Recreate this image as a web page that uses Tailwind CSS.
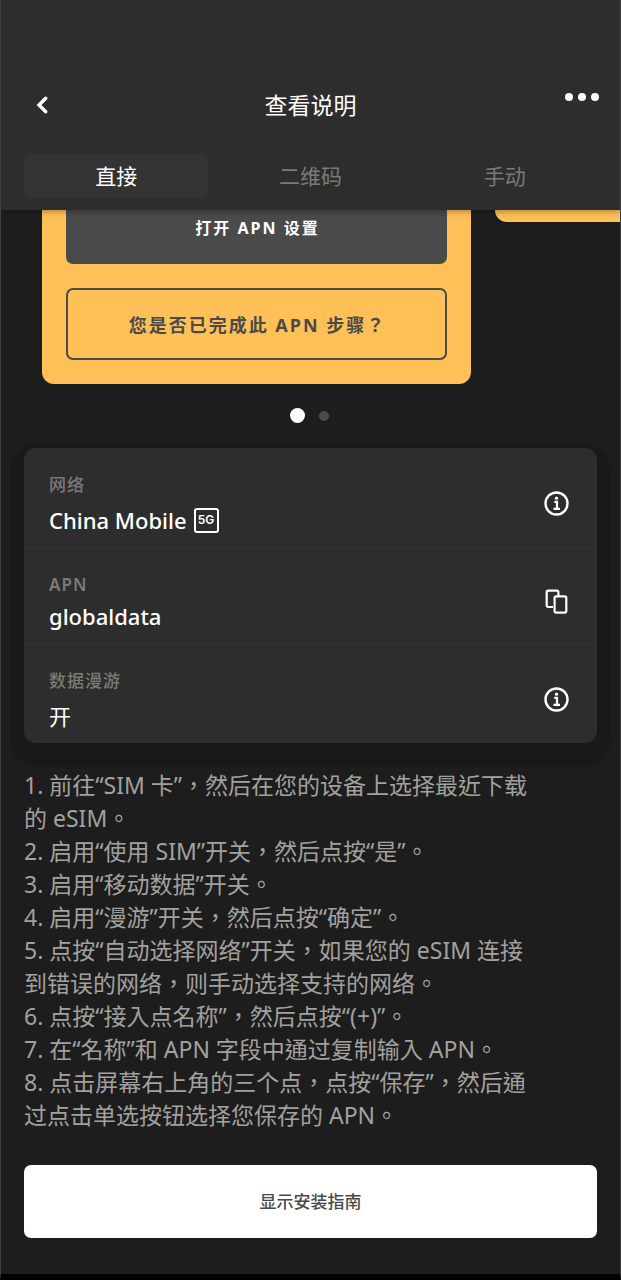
<!DOCTYPE html>
<html lang="zh-TW">
<head>
<meta charset="utf-8">
<meta name="viewport" content="width=device-width, initial-scale=1">
<title>查看说明</title>
<script src="https://cdn.jsdelivr.net/npm/@tailwindcss/browser@4"></script>
</head>
<body class="bg-[#1d1d1d]">
<div class="flex min-h-screen flex-col overflow-hidden border-x border-b-6 border-x-[#404040] border-b-black bg-[#1d1d1d] font-['Noto_Sans','Noto_Sans_CJK_TC',sans-serif] text-white">

  <header class="relative z-10 bg-[#2d2d2d] px-[23px] pt-[83px] pb-[11px] shadow-[0_2px_6px_rgba(0,0,0,0.3)]">
    <div class="grid h-11 grid-cols-3 items-center">
      <button type="button" aria-label="返回" class="flex h-8 w-9 items-center justify-center">
        <svg class="h-5 w-3" viewBox="0 0 12 20" fill="none" stroke="currentColor" stroke-width="3.400"><path d="M9.700 3.200 3 10l6.700 6.800" stroke-linecap="round" stroke-linejoin="miter"/></svg>
      </button>
      <h1 class="text-center text-[23px] leading-8">查看说明</h1>
      <button type="button" aria-label="更多" class="-mr-0.5 mb-4 flex h-6 items-center justify-end gap-[5px]">
        <span class="size-2 rounded-full bg-white"></span>
        <span class="size-2 rounded-full bg-white"></span>
        <span class="size-2 rounded-full bg-white"></span>
      </button>
    </div>
    <nav class="mt-[26px] grid grid-cols-3 gap-[10px] text-[21px] leading-[46px]">
      <button type="button" class="rounded-[9px] bg-[#333333]">直接</button>
      <button type="button" class="rounded-[9px] text-[#7c7a78]">二维码</button>
      <button type="button" class="rounded-[9px] text-[#7c7a78]">手动</button>
    </nav>
  </header>

  <main class="flex flex-1 flex-col">
    <section class="flex items-start gap-6 overflow-hidden pl-[41px]">
      <div class="-mt-[18px] flex w-[429px] shrink-0 flex-col gap-6 rounded-b-xl bg-[#ffc157] px-6 pb-6 font-bold">
        <button type="button" class="h-[72px] rounded-[7px] bg-[#4a4a4a] pl-0.5 text-base tracking-[2px]">打开 APN 设置</button>
        <button type="button" class="h-[72px] rounded-[7px] border-2 border-[#4a4a4a] pt-0.5 pl-0.5 text-lg tracking-[2px] text-[#4a4a4a]">您是否已完成此 APN 步骤？</button>
      </div>
      <div class="h-3 w-[429px] shrink-0 rounded-bl-xl bg-[#ffc157]"></div>
    </section>

    <div class="mt-6 flex items-center justify-center gap-[14px] pr-[3px]">
      <span class="size-[15px] rounded-full bg-white"></span>
      <span class="size-[10px] rounded-full bg-[#4a4a4a]"></span>
    </div>

    <dl class="mx-[23px] mt-[25px] divide-y divide-[#343434] rounded-xl bg-[#2d2d2d] shadow-[0_10px_2px_13px_#191919]">
      <div class="flex items-center justify-between pt-6 pr-7 pb-[9px] pl-[25px]">
        <div>
          <dt class="text-[17px] leading-[26px] font-medium tracking-[1px] text-[#7c7a78]">网络</dt>
          <dd class="flex items-center gap-[7px] pt-1 text-[22px] leading-9 font-medium">China Mobile
            <span class="flex h-[25px] w-[25px] items-center justify-center rounded-[3px] border-2 border-white font-['Inter',sans-serif] text-xs leading-3 font-semibold">5G</span>
          </dd>
        </div>
        <button type="button" aria-label="网络信息" class="pb-1">
          <svg class="size-[25px]" viewBox="0 0 25 25" fill="none" stroke="currentColor" stroke-width="2.400"><circle cx="12.500" cy="12.500" r="11"/><path d="M10.300 10.900h2.700v6.500M9.500 17.900h6.500" stroke-width="2.200"/><circle cx="12.500" cy="7.200" r="1.600" fill="currentColor" stroke="none"/></svg>
        </button>
      </div>
      <div class="flex items-center justify-between pt-6 pr-7 pb-[9px] pl-[25px]">
        <div>
          <dt class="text-[17px] leading-[26px] font-semibold tracking-[1px] text-[#7c7a78]">APN</dt>
          <dd class="text-[22px] leading-9 font-medium">globaldata</dd>
        </div>
        <button type="button" aria-label="复制 APN" class="pb-1">
          <svg class="size-[25px]" viewBox="0 0 25 25" fill="none" stroke="currentColor" stroke-width="2.200" stroke-linejoin="round"><path d="M9 18H4.200a1.500 1.500 0 0 1-1.500-1.500V3.100a1.500 1.500 0 0 1 1.500-1.500h8.700a1.500 1.500 0 0 1 1.500 1.500V7"/><rect x="10.600" y="7.400" width="11.700" height="16.200" rx="1.500"/></svg>
        </button>
      </div>
      <div class="flex items-center justify-between pt-6 pr-7 pb-[9px] pl-[25px]">
        <div>
          <dt class="text-[17px] leading-[26px] font-medium tracking-[1px] text-[#7c7a78]">数据漫游</dt>
          <dd class="pt-1 text-[22px] leading-9">开</dd>
        </div>
        <button type="button" aria-label="数据漫游信息" class="pb-1">
          <svg class="size-[25px]" viewBox="0 0 25 25" fill="none" stroke="currentColor" stroke-width="2.400"><circle cx="12.500" cy="12.500" r="11"/><path d="M10.300 10.900h2.700v6.500M9.500 17.900h6.500" stroke-width="2.200"/><circle cx="12.500" cy="7.200" r="1.600" fill="currentColor" stroke="none"/></svg>
        </button>
      </div>
    </dl>

    <ol class="mt-[26px] mr-[78px] ml-[23px] text-[23px] leading-[33px] text-[#a3a19f]">
      <li>1. 前往“SIM 卡”，然后在您的设备上选择最近下载的 eSIM。</li>
      <li>2. 启用“使用 SIM”开关，然后点按“是”。</li>
      <li>3. 启用“移动数据”开关。</li>
      <li>4. 启用“漫游”开关，然后点按“确定”。</li>
      <li>5. 点按“自动选择网络”开关，如果您的 eSIM 连接到错误的网络，则手动选择支持的网络。</li>
      <li>6. 点按“接入点名称”，然后点按“(+)”。</li>
      <li>7. 在“名称”和 APN 字段中通过复制输入 APN。</li>
      <li>8. 点击屏幕右上角的三个点，点按“保存”，然后通过点击单选按钮选择您保存的 APN。</li>
    </ol>

    <button type="button" class="mx-[23px] mt-auto mb-9 h-[73px] shrink-0 rounded-[7px] bg-white text-[17px] font-medium text-[#4a4a4a]">显示安装指南</button>
  </main>
</div>
</body>
</html>
